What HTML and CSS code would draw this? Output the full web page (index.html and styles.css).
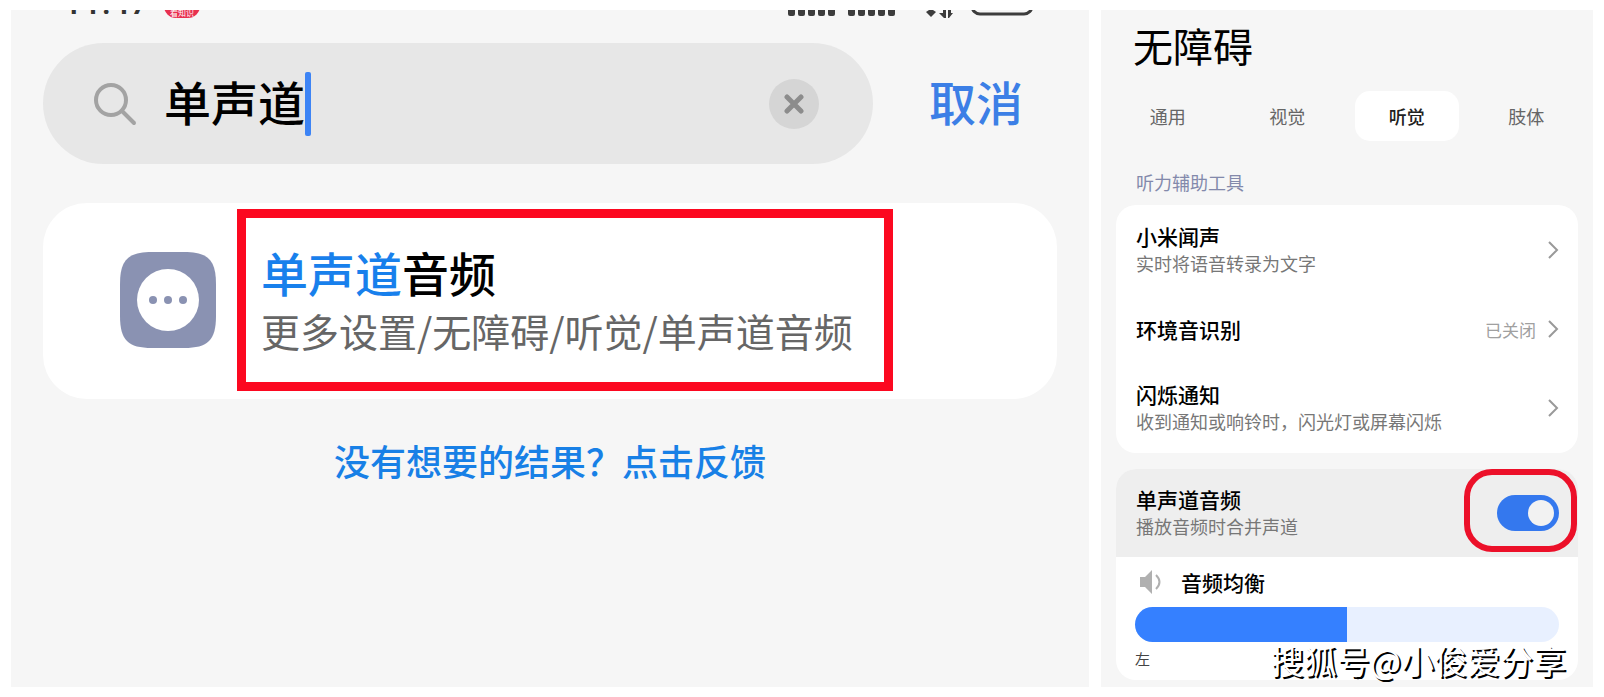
FILE: index.html
```html
<!DOCTYPE html>
<html lang="zh-CN">
<head>
    <meta charset="UTF-8">
    <meta name="viewport" content="width=device-width, initial-scale=1.0">
    <title>单声道音频</title>
    <link rel="stylesheet" href="styles.css">
</head>
<body>
    <section class="panel search-panel">
        <div class="status-bar">
            <span class="clock">11:47</span>
            <span class="badge">看知识</span>
            <svg class="status-icons" width="248" height="8" viewBox="0 0 248 8">
                <g fill="#3c3c3c">
                    <rect x="1" y="-4" width="7" height="10" rx="2"/>
                    <rect x="11" y="-4" width="7" height="10" rx="2"/>
                    <rect x="21" y="-4" width="7" height="10" rx="2"/>
                    <rect x="31" y="-4" width="7" height="10" rx="2"/>
                    <rect x="41" y="-4" width="7" height="10" rx="2"/>
                    <rect x="61" y="-4" width="7" height="10" rx="2"/>
                    <rect x="71" y="-4" width="7" height="10" rx="2"/>
                    <rect x="81" y="-4" width="7" height="10" rx="2"/>
                    <rect x="91" y="-4" width="7" height="10" rx="2"/>
                    <rect x="101" y="-4" width="7" height="10" rx="2"/>
                    <path d="M139 2 L142 0 H146 L149 2 L144 7 Z"/>
                    <path d="M152 3 L156 3 V0 H159 V8 H157 Z"/>
                    <path d="M161 0 H164 V3 H166 L162 8 H161 Z"/>
                </g>
                <rect x="185" y="-20" width="60" height="24" rx="8" fill="none" stroke="#3c3c3c" stroke-width="3"/>
            </svg>
        </div>

        <form class="search-row">
            <div class="search-box">
                <svg class="search-icon" width="44" height="44" viewBox="0 0 44 44" fill="none" stroke="#a3a3a3" stroke-width="4" stroke-linecap="round">
                    <circle cx="17" cy="18" r="15"/>
                    <path d="M28 29 L40 41"/>
                </svg>
                <input class="search-input" type="text" value="单声道" aria-label="搜索">
                <span class="caret"></span>
                <button class="clear" type="button" aria-label="清除">
                    <svg width="20" height="20" viewBox="0 0 20 20" stroke="#8c8c8c" stroke-width="5" stroke-linecap="round">
                        <path d="M3 3 L17 17 M17 3 L3 17"/>
                    </svg>
                </button>
            </div>
            <button class="cancel" type="button">取消</button>
        </form>

        <div class="result-card">
            <svg class="result-icon" width="96" height="96" viewBox="0 0 96 96">
                <path d="M0 32 C0 8 8 0 32 0 H64 C88 0 96 8 96 32 V64 C96 88 88 96 64 96 H32 C8 96 0 88 0 64 Z" fill="#8a92b2"/>
                <circle cx="48" cy="48" r="31" fill="#fff"/>
                <g fill="#8a92b2">
                    <circle cx="33" cy="48" r="4"/>
                    <circle cx="48" cy="48" r="4"/>
                    <circle cx="63" cy="48" r="4"/>
                </g>
            </svg>
            <a class="result" href="#mono">
                <span class="result-title"><mark>单声道</mark>音频</span>
                <span class="result-path">更多设置/无障碍/听觉/单声道音频</span>
            </a>
        </div>

        <a class="feedback" href="#feedback">没有想要的结果？点击反馈</a>
    </section>

    <section class="panel access-panel">
        <h1>无障碍</h1>
        <nav class="tabs">
            <button type="button">通用</button>
            <button type="button">视觉</button>
            <button type="button" class="active">听觉</button>
            <button type="button">肢体</button>
        </nav>

        <h2>听力辅助工具</h2>
        <div class="card">
            <a class="row" href="#hear">
                <span class="text">
                    <span class="name">小米闻声</span>
                    <span class="desc">实时将语音转录为文字</span>
                </span>
                <svg class="chevron" width="12" height="20" viewBox="0 0 12 20"><path d="M2 2 L10 10 L2 18"/></svg>
            </a>
            <a class="row short" href="#sound">
                <span class="text">
                    <span class="name">环境音识别</span>
                </span>
                <span class="state">已关闭</span>
                <svg class="chevron" width="12" height="20" viewBox="0 0 12 20"><path d="M2 2 L10 10 L2 18"/></svg>
            </a>
            <a class="row" href="#flash">
                <span class="text">
                    <span class="name">闪烁通知</span>
                    <span class="desc">收到通知或响铃时，闪光灯或屏幕闪烁</span>
                </span>
                <svg class="chevron" width="12" height="20" viewBox="0 0 12 20"><path d="M2 2 L10 10 L2 18"/></svg>
            </a>
        </div>

        <div class="card audio-card" id="mono">
            <div class="row pressed">
                <label class="text" for="monoSwitch">
                    <span class="name">单声道音频</span>
                    <span class="desc">播放音频时合并声道</span>
                </label>
                <span class="switch-wrap">
                    <input class="switch" type="checkbox" id="monoSwitch" checked>
                </span>
            </div>
            <div class="balance">
                <label class="balance-label" for="balance">
                    <svg width="24" height="24" viewBox="0 0 24 24">
                        <path d="M1 7 H6 L13 0 V24 L6 17 H1 Z" fill="#b0b0b0"/>
                        <path d="M17 5 Q24 12 17 19" fill="none" stroke="#b0b0b0" stroke-width="2"/>
                    </svg>
                    音频均衡
                </label>
                <input class="slider" type="range" id="balance" min="0" max="100" value="50">
                <span class="side">左</span>
            </div>
        </div>
        <span class="watermark">搜狐号@小俊爱分享</span>
    </section>
</body>
</html>
```
FILE: styles.css
```css
* {
    box-sizing: border-box;
}
body {
    font-family: "Noto Sans CJK SC", sans-serif;
    background: #fff;
    color: #000;
    margin: 0;
    padding: 10px 11px;
    min-height: 100vh;
    display: grid;
    grid-template-columns: minmax(0, 1078fr) minmax(0, 492fr);
    gap: 12px;
}
button, input {
    font-family: inherit;
    border: none;
    background: none;
    margin: 0;
    padding: 0;
}
button {
    cursor: pointer;
}
a {
    color: inherit;
    text-decoration: none;
}
.panel {
    background: #f6f6f6;
    position: relative;
    overflow: hidden;
}

/* search page */
.search-panel {
    padding: 0 32px;
}
.status-bar {
    display: flex;
    align-items: flex-end;
    height: 8px;
    padding: 0 22px 0 20px;
    overflow: hidden;
}
.clock {
    font-family: Roboto, sans-serif;
    font-size: 34px;
    font-weight: 500;
    line-height: 32px;
    color: #333;
    width: 101px;
}
.badge {
    width: 36px;
    height: 28px;
    border-radius: 12px;
    background: #e8304f;
    color: #fff;
    font-size: 8px;
    line-height: 46px;
    text-align: center;
    white-space: nowrap;
}
.status-icons {
    margin-left: auto;
}
.search-row {
    display: flex;
    align-items: center;
    margin: 25px 0 0;
}
.search-box {
    flex: 1;
    display: flex;
    align-items: center;
    height: 121px;
    padding: 0 54px 0 51px;
    border-radius: 61px;
    background: #e7e7e7;
}
.search-input {
    width: 3em;
    height: 64px;
    margin-left: 26px;
    padding-bottom: 6px;
    font-size: 47px;
    font-weight: 500;
    outline: none;
}
.caret {
    width: 6px;
    height: 64px;
    border-radius: 2px;
    background: #3d84f5;
}
.clear {
    display: flex;
    align-items: center;
    justify-content: center;
    width: 50px;
    height: 50px;
    margin-left: auto;
    border-radius: 50%;
    background: #d5d5d5;
}
.cancel {
    margin: 0 34px 0 56px;
    padding-bottom: 6px;
    font-size: 47px;
    font-weight: 500;
    line-height: 64px;
    color: #3c7fe6;
}
.result-card {
    display: flex;
    align-items: center;
    margin-top: 39px;
    padding: 6px 20px 8px 77px;
    border-radius: 44px;
    background: #fff;
}
.result-icon {
    flex: none;
    margin-right: 21px;
}
.result {
    padding: 26px 31px 22px 15px;
    border: 9px solid #fc0820;
}
.result-title {
    display: block;
    font-size: 47px;
    font-weight: 500;
    line-height: 56px;
}
.result-title mark {
    background: none;
    color: #1880ec;
}
.result-path {
    display: block;
    font-size: 39px;
    line-height: 60px;
    color: #666;
    white-space: nowrap;
}
.feedback {
    display: block;
    margin-top: 36px;
    font-size: 36px;
    font-weight: 500;
    line-height: 50px;
    text-align: center;
    color: #1880e6;
}

/* accessibility page */
.access-panel {
    padding: 9px 15px 0;
}
h1 {
    margin: 0 0 20px 17px;
    font-size: 40px;
    font-weight: 400;
    line-height: 52px;
}
.tabs {
    display: grid;
    grid-template-columns: repeat(4, 1fr);
    gap: 16px;
}
.tabs button {
    height: 50px;
    border-radius: 15px;
    font-size: 18px;
    color: #666;
}
.tabs .active {
    background: #fff;
    color: #222;
    font-weight: 500;
}
h2 {
    margin: 28px 0 10px 20px;
    font-size: 18px;
    font-weight: 400;
    line-height: 26px;
    color: #8389ab;
}
.card {
    border-radius: 20px;
    background: #fff;
    overflow: hidden;
}
.row {
    display: flex;
    align-items: center;
    min-height: 90px;
    padding: 0 19px 0 20px;
}
.row.short {
    min-height: 68px;
}
.row.pressed {
    min-height: 88px;
    background: #eee;
}
.text {
    flex: 1;
}
.name {
    display: block;
    font-size: 21px;
    font-weight: 500;
    line-height: 26px;
}
.desc {
    display: block;
    font-size: 18px;
    line-height: 28px;
    color: #777;
    white-space: nowrap;
}
.state {
    margin-right: 11px;
    font-size: 17px;
    color: #a0a0a0;
}
.chevron {
    fill: none;
    stroke: #999;
    stroke-width: 2;
}
.audio-card {
    margin-top: 16px;
}
.switch-wrap {
    position: relative;
    display: flex;
}
/* red ring around the switch */
.switch-wrap::after {
    content: "";
    position: absolute;
    inset: -26px -18px -21px -33px;
    border: 6px solid #ec1029;
    border-radius: 28px;
    pointer-events: none;
}
.switch {
    appearance: none;
    display: flex;
    align-items: center;
    justify-content: flex-end;
    width: 62px;
    height: 36px;
    padding-right: 5px;
    border-radius: 18px;
    background: #3478ee;
}
.switch::before {
    content: "";
    width: 26px;
    height: 26px;
    border-radius: 50%;
    background: #f2f2f2;
}
.switch:not(:checked) {
    justify-content: flex-start;
    padding-left: 5px;
    background: #ccc;
}
.balance {
    padding: 0 19px 4px;
}
.balance-label {
    display: flex;
    align-items: center;
    gap: 18px;
    height: 50px;
    padding-left: 4px;
    font-size: 21px;
    font-weight: 500;
}
.slider {
    appearance: none;
    display: block;
    width: 100%;
    height: 35px;
    border-radius: 18px;
    background: linear-gradient(to right, #3580ff 50%, #e8f0ff 50%);
}
.slider::-webkit-slider-thumb {
    appearance: none;
    width: 1px;
    height: 35px;
}
.side {
    display: block;
    font-size: 15px;
    line-height: 34px;
    color: #444;
}
.watermark {
    position: absolute;
    right: 27px;
    bottom: 7px;
    font-size: 33px;
    line-height: 40px;
    color: #fff;
    text-shadow: 2px 2px 0 #000;
}
```
